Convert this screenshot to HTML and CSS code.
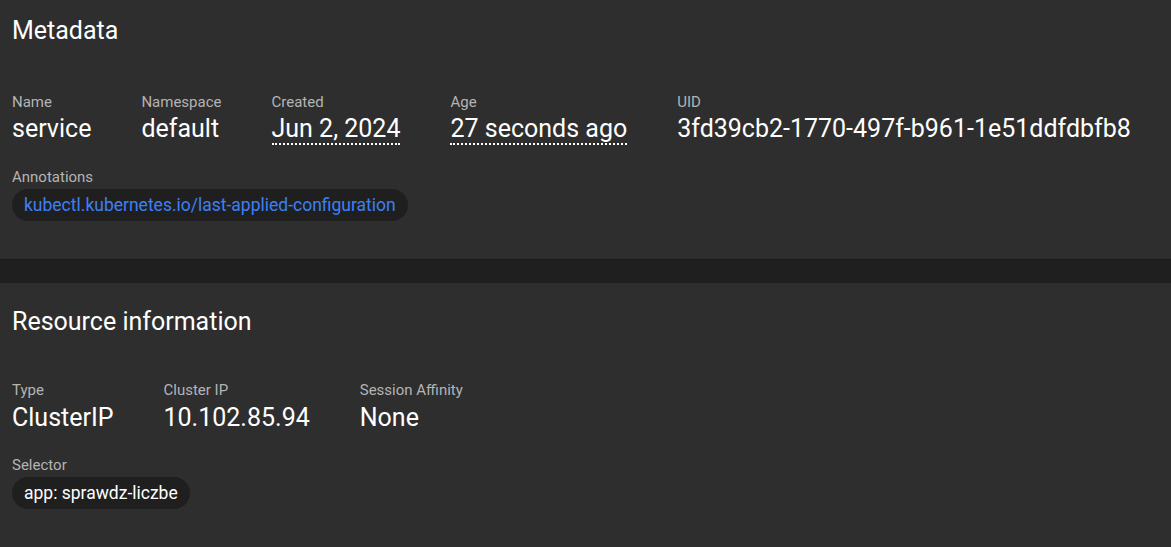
FILE: index.html
```html
<!DOCTYPE html>
<html>
<head>
<meta charset="utf-8">
<link rel="stylesheet" href="styles.css">
</head>
<body>
<section class="card">
  <h2 class="title">Metadata</h2>
  <div class="props">
    <div class="prop"><div class="label">Name</div><div class="value">service</div></div>
    <div class="prop"><div class="label">Namespace</div><div class="value">default</div></div>
    <div class="prop"><div class="label">Created</div><div class="value"><span class="dotted">Jun 2, 2024</span></div></div>
    <div class="prop"><div class="label">Age</div><div class="value"><span class="dotted">27 seconds ago</span></div></div>
    <div class="prop"><div class="label">UID</div><div class="value">3fd39cb2-1770-497f-b961-1e51ddfdbfb8</div></div>
  </div>
  <div class="block">
    <div class="label">Annotations</div>
    <div class="chips"><span class="chip link">kubectl.kubernetes.io/last-applied-configuration</span></div>
  </div>
</section>
<div class="spacer"></div>
<section class="card card2">
  <h2 class="title">Resource information</h2>
  <div class="props">
    <div class="prop"><div class="label">Type</div><div class="value">ClusterIP</div></div>
    <div class="prop"><div class="label">Cluster IP</div><div class="value">10.102.85.94</div></div>
    <div class="prop"><div class="label">Session Affinity</div><div class="value">None</div></div>
  </div>
  <div class="block">
    <div class="label">Selector</div>
    <div class="chips"><span class="chip">app: sprawdz-liczbe</span></div>
  </div>
</section>
</body>
</html>
```
FILE: styles.css
```css
html, body {
  margin: 0;
  padding: 0;
  background: #2e2e2e;
  font-family: Roboto, "Liberation Sans", sans-serif;
  color: #ffffff;
  height: 100%;
  overflow: hidden;
}
.card {
  background: #2e2e2e;
  padding: 0 12px;
  height: 259px;
  box-sizing: border-box;
}
.card2 {
  height: 264px;
  padding-top: 5px;
}
.card2 .title {
  padding-top: 19px;
}
.card2 .value {
  line-height: 38px;
}
.card2 .block {
  margin-top: 20px;
}
.spacer {
  height: 24px;
  background: #1f1f1f;
  border-top: 1px solid #1a1a1a;
  box-sizing: border-box;
}
.title {
  margin: 0;
  padding-top: 16px;
  font-size: 25px;
  font-weight: 400;
  line-height: 30px;
  height: 94px;
  box-sizing: border-box;
}
.props {
  display: flex;
  gap: 50px;
}
.label {
  font-size: 15px;
  line-height: 17px;
  color: #b4b4b4;
}
.value {
  font-size: 25px;
  line-height: 36px;
  color: #ffffff;
}
.dotted {
  border-bottom: 2px dotted #ffffff;
}
.block {
  margin-top: 22px;
}
.chips {
  margin-top: 3px;
  display: flex;
}
.chip {
  background: #1f1f1f;
  border-radius: 16px;
  height: 32px;
  line-height: 32px;
  padding: 0 12px;
  font-size: 17.5px;
  color: #ffffff;
}
.chip.link {
  color: #3d80f5;
}
```
